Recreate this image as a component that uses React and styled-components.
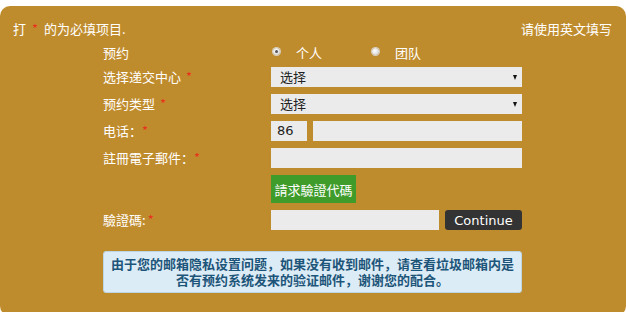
import React from "react";
import styled, { createGlobalStyle } from "styled-components";

const GlobalStyle = createGlobalStyle`
  body {
    margin: 0;
    background: #ffffff;
    font-family: "Noto Sans CJK SC", "Liberation Sans", sans-serif;
  }
`;

const gold = "#bf8c2d";

const Panel = styled.div`
  margin-top: 6px;
  height: 310px;
  background-color: ${gold};
  border-radius: 10px;
  color: #ffffff;
  font-size: 13px;
  box-sizing: border-box;
  padding-top: 14px;
`;

const Header = styled.div`
  display: flex;
  justify-content: space-between;
  align-items: center;
  height: 16px;
  padding: 0 14px 0 13px;
`;

const Star = styled.span`
  color: #e8321e;
  margin: 0 ${({ gap }) => (gap === undefined ? 6 : gap)}px;
`;

const Form = styled.div`
  display: grid;
  grid-template-columns: 168px 251px;
  row-gap: 7px;
  margin: 7px 0 0 103px;
  align-items: center;
`;

const Label = styled.div`
  line-height: 20px;
  white-space: nowrap;
`;

const TopLabel = styled(Label)`
  line-height: 14px;
  padding-top: 3px;
`;

const RadioRow = styled.div`
  display: flex;
  align-items: center;
  height: 14px;
  padding-top: 3px;
`;

const Radio = styled.span`
  width: 7px;
  height: 7px;
  border-radius: 50%;
  margin: -3px 16px 0 2px;
  background: radial-gradient(circle at 40% 40%, #ffffff, #c9c9c9);
  box-shadow: 0 0 0 1px #d8d0c0;
  position: relative;
  ${({ checked }) =>
    checked &&
    `
    &::after {
      content: "";
      position: absolute;
      left: 2px;
      top: 2px;
      width: 3px;
      height: 3px;
      border-radius: 50%;
      background: #555;
    }
  `}
`;

const RadioText = styled.span`
  line-height: 14px;
  margin-right: ${({ gap }) => gap || 0}px;
`;

const Field = styled.div`
  height: 20px;
  background: #ebebeb;
  box-sizing: border-box;
  width: ${({ w }) => (w ? `${w}px` : "100%")};
  color: #222;
  font-family: "DejaVu Sans", Verdana, sans-serif;
  font-size: 13px;
  line-height: 20px;
  padding-left: 6px;
`;

const Select = styled(Field)`
  display: flex;
  justify-content: space-between;
  align-items: center;
  font-family: "Noto Sans CJK SC", sans-serif;
  padding: 0 5px 0 9px;
`;

const Arrow = styled.span`
  width: 0;
  height: 0;
  border-left: 2.5px solid transparent;
  border-right: 2.5px solid transparent;
  border-top: 5px solid #111;
`;

const Pair = styled.div`
  display: flex;
  gap: 6px;
  align-items: center;
`;

const GreenButton = styled.div`
  width: 85px;
  height: 28px;
  background: #3f9c2b;
  color: #fff;
  display: flex;
  align-items: center;
  justify-content: center;
  font-size: 13px;
`;

const DarkButton = styled.div`
  width: 77px;
  height: 20px;
  background: #333333;
  border-radius: 3px;
  color: #fff;
  font-family: "DejaVu Sans", Verdana, sans-serif;
  font-size: 13px;
  display: flex;
  align-items: center;
  justify-content: center;
`;

const Notice = styled.div`
  margin: 21px 0 0 103px;
  width: 419px;
  height: 42px;
  box-sizing: border-box;
  background: #dcecf6;
  border: 1px solid #bcd6e6;
  border-radius: 3px;
  color: #1c5579;
  font-weight: bold;
  font-size: 13px;
  line-height: 16px;
  text-align: center;
  display: flex;
  align-items: center;
  justify-content: center;
  padding: 0 6px;
`;

export default function App() {
  return (
    <>
      <GlobalStyle />
      <Panel>
        <Header>
          <span>
            打<Star>*</Star>的为必填项目.
          </span>
          <span>请使用英文填写</span>
        </Header>
        <Form>
          <TopLabel>预约</TopLabel>
          <RadioRow>
            <Radio checked />
            <RadioText gap={48}>个人</RadioText>
            <Radio />
            <RadioText>团队</RadioText>
          </RadioRow>

          <Label>
            选择递交中心<Star gap={5}>*</Star>
          </Label>
          <Select>
            选择
            <Arrow />
          </Select>

          <Label>
            预约类型<Star gap={5}>*</Star>
          </Label>
          <Select>
            选择
            <Arrow />
          </Select>

          <Label>
            电话：<Star gap={0}>*</Star>
          </Label>
          <Pair>
            <Field w={42}>86</Field>
            <Field />
          </Pair>

          <Label>
            註冊電子郵件：<Star gap={0}>*</Star>
          </Label>
          <Field />

          <div />
          <GreenButton>請求驗證代碼</GreenButton>

          <Label>
            驗證碼:<Star gap={2}>*</Star>
          </Label>
          <Pair>
            <Field w={168} />
            <DarkButton>Continue</DarkButton>
          </Pair>
        </Form>
        <Notice>
          由于您的邮箱隐私设置问题，如果没有收到邮件，请查看垃圾邮箱内是否有预约系统发来的验证邮件，谢谢您的配合。
        </Notice>
      </Panel>
    </>
  );
}
